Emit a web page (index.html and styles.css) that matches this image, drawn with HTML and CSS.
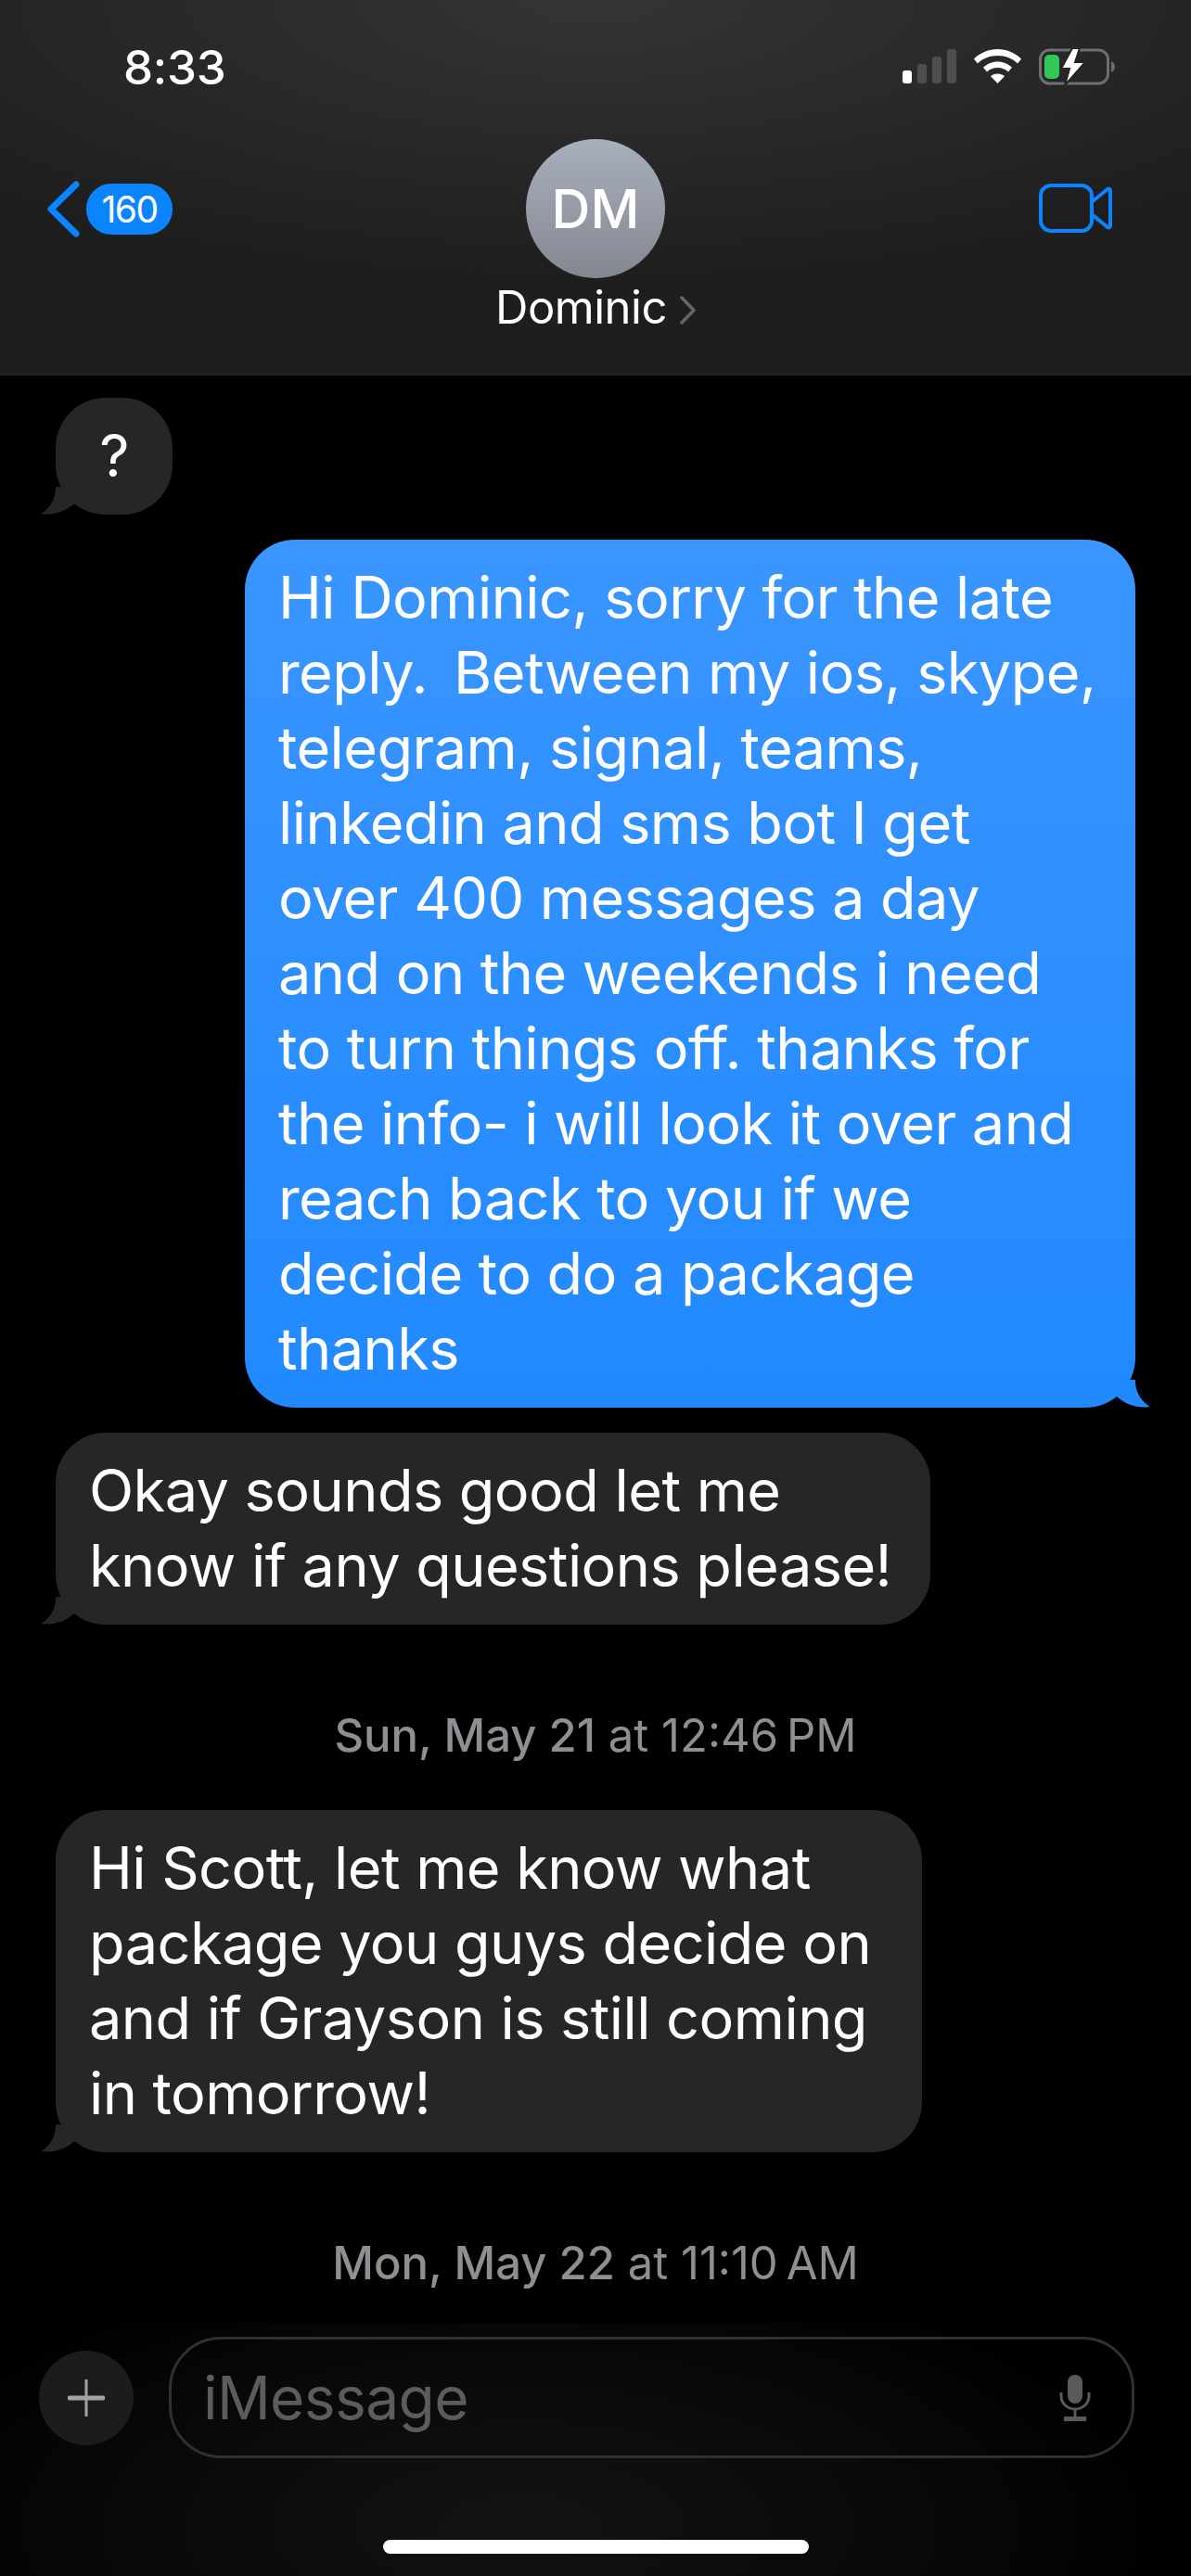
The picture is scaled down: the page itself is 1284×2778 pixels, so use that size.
FILE: index.html
```html
<!DOCTYPE html>
<html lang="en">
<head>
<meta charset="utf-8">
<title>Dominic</title>
<link rel="stylesheet" href="styles.css">
</head>
<body>
<div class="phone">
  <header class="top">
    <div class="status">
      <span class="clock">8:33</span>
      <div class="status-icons">
        <svg class="signal" viewBox="0 0 58 37"><rect x="0" y="23" width="10" height="14" rx="3" fill="#fff"/><rect x="16" y="16" width="10" height="21" rx="3" fill="#4f4f4f"/><rect x="32" y="8" width="10" height="29" rx="3" fill="#4f4f4f"/><rect x="48" y="0" width="10" height="37" rx="3" fill="#4f4f4f"/></svg>
        <svg class="wifi" viewBox="0 0 51 37"><path d="M25.5 0C35 0 44 3.800 51 10.500L47 15.500C41.500 10 34 7 25.500 7S9.500 10 4 15.500L0 10.500C7 3.800 16 0 25.500 0Z" fill="#fff"/><path d="M25.500 13.500C31.500 13.500 37 15.800 41 19.800L37 24.500C34 21.700 30 20 25.500 20S17 21.700 14 24.500L10 19.800C14 15.800 19.500 13.500 25.500 13.500Z" fill="#fff"/><path d="M25.500 26.500C28.500 26.500 31 27.500 33 29.300L25.500 37L18 29.300C20 27.500 22.500 26.500 25.500 26.500Z" fill="#fff"/></svg>
        <svg class="battery" viewBox="0 0 82 40"><rect x="1.500" y="2" width="73" height="36" rx="10" fill="none" stroke="#6f6f6f" stroke-width="3"/><path d="M78 14c2.500 1 4 3.500 4 6s-1.500 5-4 6z" fill="#6f6f6f"/><rect x="6" y="7" width="16" height="26" rx="5" fill="#31c859"/><path d="M36 0L24 22H33L28 40L50 15H39L44 0Z" fill="#fff" stroke="#232323" stroke-width="2"/></svg>
      </div>
    </div>
    <nav class="nav">
      <div class="back">
        <svg class="chevron" viewBox="0 0 37 63"><path d="M32 5L5 31.500L32 58" fill="none" stroke="#0a84ff" stroke-width="7" stroke-linecap="round" stroke-linejoin="round"/></svg>
        <span class="badge">160</span>
      </div>
      <div class="contact">
        <div class="avatar">DM</div>
        <div class="contact-name">Dominic<svg class="disclosure" viewBox="0 0 17 31"><path d="M2 2L15 15.500L2 29" fill="none" stroke="#666" stroke-width="3.500" stroke-linecap="round"/></svg></div>
      </div>
      <svg class="video" viewBox="0 0 79 53"><rect x="2" y="2" width="55" height="49" rx="11" fill="none" stroke="#0a84ff" stroke-width="4"/><path d="M58 19L74 6C75.500 5 77 6 77 8V45C77 47 75.500 48 74 47L58 34" fill="none" stroke="#0a84ff" stroke-width="4" stroke-linejoin="round"/></svg>
    </nav>
  </header>

  <main class="thread">
    <div class="bubble in single">?<svg class="tail" viewBox="0 0 50 30"><path d="M16 0V2C16 14 8 25 0 29C14 31 26 27 36 18L50 0Z"/></svg></div>
    <div class="bubble out">Hi Dominic, sorry for the late<br>reply. &#8201;Between my ios, skype,<br>telegram, signal, teams,<br>linkedin and sms bot I get<br>over 400 messages a day<br>and on the weekends i need<br>to turn things off. thanks for<br>the info- i will look it over and<br>reach back to you if we<br>decide to do a package<br>thanks<svg class="tail" viewBox="0 0 50 30"><path d="M16 0V2C16 14 8 25 0 29C14 31 26 27 36 18L50 0Z"/></svg></div>
    <div class="bubble in reply-short">Okay sounds good let me<br>know if any questions please!<svg class="tail" viewBox="0 0 50 30"><path d="M16 0V2C16 14 8 25 0 29C14 31 26 27 36 18L50 0Z"/></svg></div>
    <p class="stamp first"><b>Sun, May 21</b> at 12:46&#8201;PM</p>
    <div class="bubble in reply-long">Hi Scott, let me know what<br>package you guys decide on<br>and if Grayson is still coming<br>in tomorrow!<svg class="tail" viewBox="0 0 50 30"><path d="M16 0V2C16 14 8 25 0 29C14 31 26 27 36 18L50 0Z"/></svg></div>
    <p class="stamp second"><b>Mon, May 22</b> at 11:10&#8201;AM</p>
  </main>

  <footer class="composer">
    <div class="input-row">
      <div class="plus">
        <svg class="plus-mark" viewBox="0 0 40 40"><path d="M20 1V39" stroke="#a3a3a3" stroke-width="3" stroke-linecap="round"/><path d="M2 20H38" stroke="#a3a3a3" stroke-width="5" stroke-linecap="round"/></svg>
      </div>
      <div class="field">
        <span class="placeholder">iMessage</span>
        <svg class="mic" viewBox="0 0 36 50"><rect x="10" y="0" width="16" height="31" rx="8" fill="#5a5a5a"/><path d="M3 19V23C3 31 10 37 18 37S33 31 33 23V19" fill="none" stroke="#5a5a5a" stroke-width="3"/><path d="M18 37V46" stroke="#5a5a5a" stroke-width="3"/><path d="M6 47.500H30" stroke="#5a5a5a" stroke-width="5"/></svg>
      </div>
    </div>
    <div class="home-bar"></div>
  </footer>
</div>
</body>
</html>
```

FILE: styles.css
```css
* { box-sizing: border-box; }

html, body {
  margin: 0;
  background: #000;
}

.phone {
  width: 1284px;
  height: 2778px;
  display: flex;
  flex-direction: column;
  overflow: hidden;
  background: #000;
  color: #fff;
  font-family: Inter, "Liberation Sans", sans-serif;
}

/* Header */
.top {
  height: 405px;
  flex: none;
  background:
    radial-gradient(ellipse 900px 300px at 640px 0, rgba(60, 60, 60, .75), rgba(60, 60, 60, 0) 100%),
    #1e1e1e;
  border-bottom: 1px solid #262626;
}

.status {
  height: 150px;
  padding: 44px 82px 0 133px;
  display: flex;
  justify-content: space-between;
  align-items: flex-start;
}

.clock {
  font-size: 51px;
  font-weight: 500;
  line-height: 58px;
  letter-spacing: -.3px;
}

.status-icons {
  display: flex;
  align-items: flex-start;
  margin-top: 9px;
}

.signal { width: 58px; height: 37px; }
.wifi { width: 51px; height: 37px; margin-left: 19px; }
.battery { width: 82px; height: 40px; margin-left: 19px; margin-top: -1px; }

.nav {
  position: relative;
  display: flex;
  justify-content: space-between;
  align-items: flex-start;
  padding: 0 85px 0 50px;
}

.back {
  display: flex;
  align-items: center;
  gap: 6px;
  margin-top: 44px;
}

.chevron { width: 37px; height: 63px; }

.badge {
  width: 93px;
  height: 55px;
  border-radius: 27px;
  background: #0a84ff;
  font-size: 39px;
  line-height: 55px;
  text-align: center;
  letter-spacing: -1.5px;
}

.contact {
  position: absolute;
  left: 0;
  right: 0;
  top: 0;
  display: flex;
  flex-direction: column;
  align-items: center;
}

.avatar {
  width: 150px;
  height: 150px;
  border-radius: 50%;
  background: linear-gradient(#a9afbd, #838790);
  font-size: 58px;
  font-weight: 500;
  line-height: 150px;
  text-align: center;
}

.contact-name {
  margin-top: 2px;
  font-size: 49px;
  line-height: 60px;
  letter-spacing: -.5px;
  display: flex;
  align-items: center;
}

.disclosure { width: 17px; height: 31px; margin-left: 14px; margin-top: 4px; }

.video { width: 79px; height: 53px; margin-top: 48px; }

/* Conversation */
.thread {
  flex: 1;
  min-height: 0;
  padding: 24px 60px 0;
  display: flex;
  flex-direction: column;
  align-items: flex-start;
}

.bubble {
  position: relative;
  padding: 22px 36px 23px;
  border-radius: 54px;
  font-size: 63px;
  line-height: 81px;
  letter-spacing: -.55px;
  white-space: nowrap;
}

.bubble.single {
  width: 126px;
  padding-left: 0;
  padding-right: 0;
  text-align: center;
}

.bubble.in { background: #262628; }
.bubble.in .tail { fill: #262628; left: -16px; }

.bubble.out {
  align-self: flex-end;
  width: 960px;
  margin-top: 27px;
  background: linear-gradient(#3a95ff, #2189ff);
}

.bubble.out .tail { fill: #2189ff; right: -16px; transform: scaleX(-1); }

.bubble.reply-short { width: 943px; margin-top: 27px; }
.bubble.reply-long { width: 934px; }

.tail {
  position: absolute;
  bottom: 0;
  width: 50px;
  height: 30px;
}

.stamp {
  align-self: center;
  margin: 0;
  font-size: 49px;
  line-height: 56px;
  color: #8e8e93;
}

.stamp b { font-weight: 500; }
.stamp.first { margin-top: 92px; margin-bottom: 52px; }
.stamp.second { margin-top: 92px; }

/* Message composer */
.composer {
  height: 273px;
  flex: none;
  background:
    radial-gradient(ellipse 700px 300px at 560px 220px, #131313, rgba(10, 10, 10, .6) 75%, rgba(0, 0, 0, 0) 100%),
    #000;
  display: flex;
  flex-direction: column;
  padding-top: 15px;
}

.input-row {
  display: flex;
  align-items: center;
  gap: 38px;
  padding: 0 61px 0 42px;
}

.plus {
  width: 102px;
  height: 102px;
  border-radius: 50%;
  background: #1b1c1d;
  display: flex;
  align-items: center;
  justify-content: center;
}

.plus-mark { width: 40px; height: 40px; }

.field {
  flex: 1;
  height: 131px;
  border: 3px solid #303032;
  border-radius: 56px;
  display: flex;
  align-items: center;
  justify-content: space-between;
  padding: 0 43px 0 34px;
}

.placeholder {
  font-size: 64px;
  line-height: 70px;
  color: #5c5c5e;
  letter-spacing: -.6px;
}

.mic { width: 36px; height: 50px; }

.home-bar {
  width: 459px;
  height: 15px;
  margin: 88px auto 0;
  border-radius: 8px;
  background: #fff;
}
```
